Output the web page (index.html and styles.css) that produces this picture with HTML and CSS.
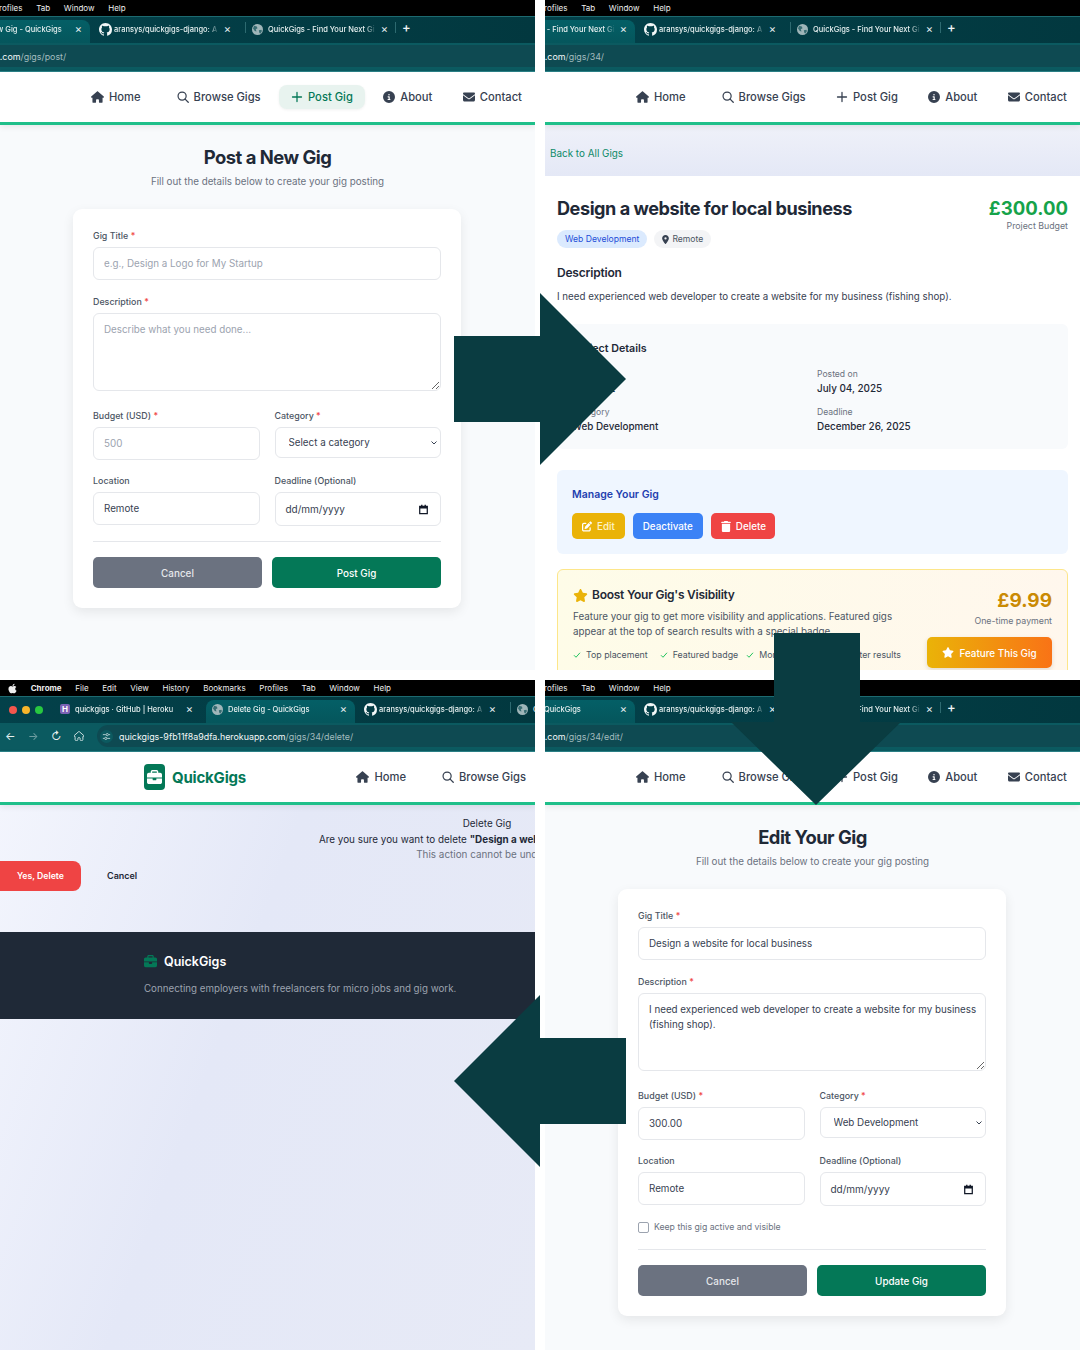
FILE: index.html
```html
<!DOCTYPE html>
<html lang="en">
  <head>
    <meta charset="UTF-8" />
    <meta name="viewport" content="width=device-width, initial-scale=1.0" />
    <title>QuickGigs</title>
    <link rel="stylesheet" href="styles.css">
  </head>

  <body>
    <svg class="defs" width="0" height="0">
      <symbol id="i-home" viewBox="0 0 576 512"><path d="M575.8 255.5c0 18-15 32.1-32 32.1h-32l.7 160.2c0 2.7-.2 5.4-.5 8.1V472c0 22.1-17.9 40-40 40H456c-1.1 0-2.2 0-3.3-.1c-1.4 .1-2.8 .1-4.2 .1H416 392c-22.1 0-40-17.9-40-40V448 384c0-17.7-14.3-32-32-32H256c-17.7 0-32 14.3-32 32v64 24c0 22.1-17.9 40-40 40H160 128.1c-1.5 0-3-.1-4.5-.2c-1.2 .1-2.4 .2-3.6 .2H104c-22.1 0-40-17.9-40-40V360c0-.9 0-1.9 .1-2.8V287.6H32c-18 0-32-14-32-32.1c0-9 3-17 10-24L266.4 8c7-7 15-8 22-8s15 2 21 7L564.8 231.5c8 7 12 15 11 24z"/></symbol>
      <symbol id="i-search" viewBox="0 0 16 16"><circle cx="6.8" cy="6.8" r="5.4" fill="none" stroke="currentColor" stroke-width="1.6"/><path d="M10.8 10.8l4.2 4.2" fill="none" stroke="currentColor" stroke-width="1.7" stroke-linecap="round"/></symbol>
      <symbol id="i-plus" viewBox="0 0 16 16"><path d="M8 2v12M2 8h12" fill="none" stroke="currentColor" stroke-width="1.7" stroke-linecap="round"/></symbol>
      <symbol id="i-info" viewBox="0 0 512 512"><path d="M256 512A256 256 0 1 0 256 0a256 256 0 1 0 0 512zM216 336h24V272H216c-13.3 0-24-10.7-24-24s10.7-24 24-24h48c13.3 0 24 10.7 24 24v88h8c13.3 0 24 10.7 24 24s-10.7 24-24 24H216c-13.3 0-24-10.7-24-24s10.7-24 24-24zm40-208a32 32 0 1 1 0 64 32 32 0 1 1 0-64z"/></symbol>
      <symbol id="i-mail" viewBox="0 0 512 512"><path d="M48 64C21.5 64 0 85.5 0 112c0 15.1 7.1 29.3 19.2 38.4L236.8 313.6c11.4 8.5 27 8.5 38.4 0L492.8 150.4c12.1-9.1 19.2-23.3 19.2-38.4c0-26.5-21.5-48-48-48H48zM0 176V384c0 35.3 28.7 64 64 64H448c35.3 0 64-28.7 64-64V176L294.4 339.2c-22.8 17.1-54 17.1-76.8 0L0 176z"/></symbol>
      <symbol id="i-star" viewBox="0 0 576 512"><path d="M316.9 18C311.6 7 300.4 0 288.1 0s-23.4 7-28.8 18L195 150.3 51.4 171.5c-12 1.8-22 10.2-25.7 21.7s-.7 24.2 7.9 32.7L137.8 329 113.2 474.7c-2 12 3 24.2 12.9 31.3s23 8 33.8 2.3l128.3-68.5 128.3 68.5c10.8 5.7 23.9 4.9 33.8-2.3s14.9-19.3 12.9-31.3L438.5 329 542.7 225.9c8.6-8.5 11.7-21.2 7.9-32.7s-13.7-19.9-25.7-21.7L381.2 150.3 316.9 18z"/></symbol>
      <symbol id="i-trash" viewBox="0 0 448 512"><path d="M135.2 17.7C140.6 6.8 151.7 0 163.8 0H284.2c12.1 0 23.2 6.8 28.6 17.7L320 32h96c17.7 0 32 14.3 32 32s-14.3 32-32 32H32C14.3 96 0 81.7 0 64S14.3 32 32 32h96l7.2-14.3zM32 128H416V448c0 35.3-28.7 64-64 64H96c-35.3 0-64-28.7-64-64V128z"/></symbol>
      <symbol id="i-edit" viewBox="0 0 512 512"><path d="M471.6 21.7c-21.9-21.9-57.3-21.9-79.2 0L362.3 51.7l97.9 97.9 30.1-30.1c21.9-21.9 21.9-57.3 0-79.2L471.6 21.7zm-299.2 220c-6.1 6.1-10.8 13.6-13.5 21.9l-29.6 88.8c-2.9 8.6-.6 18.1 5.8 24.6s15.9 8.7 24.6 5.8l88.8-29.6c8.2-2.7 15.7-7.4 21.9-13.5L437.7 172.3 339.7 74.3 172.4 241.7zM96 64C43 64 0 107 0 160V416c0 53 43 96 96 96H352c53 0 96-43 96-96V320c0-17.7-14.3-32-32-32s-32 14.3-32 32v96c0 17.7-14.3 32-32 32H96c-17.7 0-32-14.3-32-32V160c0-17.7 14.3-32 32-32h96c17.7 0 32-14.3 32-32s-14.3-32-32-32H96z"/></symbol>
      <symbol id="i-pin" viewBox="0 0 384 512"><path d="M215.7 499.2C267 435 384 279.4 384 192C384 86 298 0 192 0S0 86 0 192c0 87.4 117 243 168.3 307.2c12.3 15.3 35.1 15.3 47.4 0zM192 256a64 64 0 1 1 0-128 64 64 0 1 1 0 128z"/></symbol>
      <symbol id="i-case" viewBox="0 0 512 512"><path d="M184 48H328c4.4 0 8 3.6 8 8V96H176V56c0-4.4 3.6-8 8-8zm-56 8V96H64C28.7 96 0 124.7 0 160v96H192 320 512V160c0-35.3-28.7-64-64-64H384V56c0-30.9-25.1-56-56-56H184c-30.9 0-56 25.1-56 56zM512 288H320v32c0 17.7-14.3 32-32 32H224c-17.7 0-32-14.3-32-32V288H0V416c0 35.3 28.7 64 64 64H448c35.3 0 64-28.7 64-64V288z"/></symbol>
      <symbol id="i-github" viewBox="0 0 16 16"><path d="M8 0C3.58 0 0 3.58 0 8c0 3.54 2.29 6.53 5.47 7.59.4.07.55-.17.55-.38 0-.19-.01-.82-.01-1.49-2.01.37-2.53-.49-2.69-.94-.09-.23-.48-.94-.82-1.13-.28-.15-.68-.52-.01-.53.63-.01 1.08.58 1.23.82.72 1.21 1.87.87 2.33.66.07-.52.28-.87.51-1.07-1.78-.2-3.64-.89-3.64-3.95 0-.87.31-1.59.82-2.15-.08-.2-.36-1.02.08-2.12 0 0 .67-.21 2.2.82.64-.18 1.32-.27 2-.27.68 0 1.36.09 2 .27 1.53-1.04 2.2-.82 2.2-.82.44 1.1.16 1.92.08 2.12.51.56.82 1.27.82 2.15 0 3.07-1.87 3.75-3.65 3.95.29.25.54.73.54 1.48 0 1.07-.01 1.93-.01 2.2 0 .21.15.46.55.38A8.013 8.013 0 0016 8c0-4.42-3.58-8-8-8z"/></symbol>
      <symbol id="i-globe" viewBox="0 0 16 16"><circle cx="8" cy="8" r="8"/><path d="M3 2.500l4 1 1 2.500-2.500 1.500L6.500 11 4 10 1.500 6.500zM10 9l3.500-.5 1 1.500-2.500 4-1.500-1.500z" fill="#0b4d54" opacity=".7"/></symbol>
      <symbol id="i-apple" viewBox="0 0 384 512"><path d="M318.7 268.700c-.2-36.700 16.400-64.400 50-84.800-18.800-26.900-47.200-41.700-84.700-44.600-35.500-2.800-74.300 20.700-88.500 20.700-15 0-49.400-19.700-76.400-19.700C63.300 141.200 4 184.800 4 273.500q0 39.300 14.400 81.200c12.800 36.700 59 126.700 107.200 125.200 25.200-.6 43-17.900 75.800-17.900 31.800 0 48.300 17.900 76.400 17.900 48.600-.7 90.400-82.500 102.600-119.300-65.200-30.700-61.700-90-61.700-91.900zm-56.600-164.200c27.300-32.400 24.800-61.900 24-72.500-24.100 1.400-52 16.400-67.900 34.900-17.500 19.800-27.800 44.300-25.600 71.900 26.100 2 49.900-11.400 69.500-34.300z"/></symbol>
      <symbol id="i-cal" viewBox="0 0 16 16"><path d="M2.500 3.500h11v10.500h-11z" fill="none" stroke="currentColor" stroke-width="1.800"/><path d="M2.500 3h11v3.500h-11zM4.500 1h2v2h-2zM9.500 1h2v2h-2z" fill="currentColor"/></symbol>
      <symbol id="i-check" viewBox="0 0 16 16"><path d="M2 8.500l4 4 8-9" fill="none" stroke="currentColor" stroke-width="2"/></symbol>
      <symbol id="i-tune" viewBox="0 0 12 12"><path d="M1 3.500h4M9 3.500h2M1 8.500h2M7 8.500h4" fill="none" stroke="currentColor" stroke-width="1"/><circle cx="7" cy="3.500" r="1.500" fill="none" stroke="currentColor"/><circle cx="5" cy="8.500" r="1.500" fill="none" stroke="currentColor"/></symbol>
    </svg>

    <div class="collage">

      <!-- post a new gig -->
      <section class="panel cropped">
        <header class="browser">
          <div class="menubar">
            <span>Profiles</span><span>Tab</span><span>Window</span><span>Help</span>
          </div>
          <div class="tabstrip">
            <div class="tab active"><span class="tab-name">Post a New Gig - QuickGigs</span><span class="close">×</span></div>
            <div class="tab"><svg class="favicon gh"><use href="#i-github"/></svg><span class="tab-name">aransys/quickgigs-django: A r</span><span class="close">×</span></div>
            <div class="tab last"><svg class="favicon"><use href="#i-globe"/></svg><span class="tab-name">QuickGigs - Find Your Next Gi</span><span class="close">×</span></div>
            <span class="newtab">+</span>
          </div>
          <div class="addressbar">
            <div class="url"><span>quickgigs-9fb11f8a9dfa.herokuapp.com<em>/gigs/post/</em></span></div>
          </div>
        </header>
        <nav class="nav">
          <a class="nav-item first"><svg class="wide"><use href="#i-home"/></svg>Home</a>
          <a class="nav-item"><svg><use href="#i-search"/></svg>Browse Gigs</a>
          <a class="nav-item current"><svg><use href="#i-plus"/></svg>Post Gig</a>
          <a class="nav-item"><svg><use href="#i-info"/></svg>About</a>
          <a class="nav-item"><svg><use href="#i-mail"/></svg>Contact</a>
        </nav>
        <main class="form-page">
          <h1>Post a New Gig</h1>
          <p class="lead">Fill out the details below to create your gig posting</p>
          <form class="card">
            <div class="field">
              <label>Gig Title <i>*</i></label>
              <input type="text" placeholder="e.g., Design a Logo for My Startup" />
            </div>
            <div class="field">
              <label>Description <i>*</i></label>
              <textarea placeholder="Describe what you need done..."></textarea>
            </div>
            <div class="row">
              <div class="field">
                <label>Budget (USD) <i>*</i></label>
                <input type="text" placeholder="500" />
              </div>
              <div class="field">
                <label>Category <i>*</i></label>
                <select><option>Select a category</option></select>
              </div>
              <div class="field last">
                <label>Location</label>
                <input type="text" value="Remote" />
              </div>
              <div class="field last">
                <label>Deadline (Optional)</label>
                <div class="date"><span>dd/mm/yyyy</span><svg><use href="#i-cal"/></svg></div>
              </div>
            </div>
            <div class="actions">
              <button type="button" class="btn grey">Cancel</button>
              <button type="button" class="btn green">Post Gig</button>
            </div>
          </form>
        </main>
      </section>

      <!-- gig detail -->
      <section class="panel cropped">
        <header class="browser">
          <div class="menubar">
            <span>Profiles</span><span>Tab</span><span>Window</span><span>Help</span>
          </div>
          <div class="tabstrip">
            <div class="tab active"><span class="tab-name">QuickGigs - Find Your Next Gi</span><span class="close">×</span></div>
            <div class="tab"><svg class="favicon gh"><use href="#i-github"/></svg><span class="tab-name">aransys/quickgigs-django: A r</span><span class="close">×</span></div>
            <div class="tab last"><svg class="favicon"><use href="#i-globe"/></svg><span class="tab-name">QuickGigs - Find Your Next Gi</span><span class="close">×</span></div>
            <span class="newtab">+</span>
          </div>
          <div class="addressbar">
            <div class="url"><span>quickgigs-9fb11f8a9dfa.herokuapp.com<em>/gigs/34/</em></span></div>
          </div>
        </header>
        <nav class="nav">
          <a class="nav-item first"><svg class="wide"><use href="#i-home"/></svg>Home</a>
          <a class="nav-item"><svg><use href="#i-search"/></svg>Browse Gigs</a>
          <a class="nav-item"><svg><use href="#i-plus"/></svg>Post Gig</a>
          <a class="nav-item"><svg><use href="#i-info"/></svg>About</a>
          <a class="nav-item"><svg><use href="#i-mail"/></svg>Contact</a>
        </nav>
        <div class="backbar"><a>Back to All Gigs</a></div>
        <main class="detail">
          <div class="detail-head">
            <div>
              <h2>Design a website for local business</h2>
              <div class="tags">
                <span class="tag blue">Web Development</span>
                <span class="tag plain"><svg><use href="#i-pin"/></svg>Remote</span>
              </div>
            </div>
            <div class="budget">
              <strong>£300.00</strong>
              <span>Project Budget</span>
            </div>
          </div>
          <h3>Description</h3>
          <p class="desc">I need experienced web developer to create a website for my business (fishing shop).</p>
          <div class="facts">
            <h4>Project Details</h4>
            <dl>
              <div><dt>Posted by</dt><dd>aransys2</dd></div>
              <div><dt>Posted on</dt><dd>July 04, 2025</dd></div>
              <div><dt>Category</dt><dd>Web Development</dd></div>
              <div><dt>Deadline</dt><dd>December 26, 2025</dd></div>
            </dl>
          </div>
          <div class="manage">
            <h4>Manage Your Gig</h4>
            <div class="manage-btns">
              <a class="mini amber"><svg><use href="#i-edit"/></svg>Edit</a>
              <a class="mini blue">Deactivate</a>
              <a class="mini red"><svg><use href="#i-trash"/></svg>Delete</a>
            </div>
          </div>
          <div class="boost">
            <div class="boost-text">
              <h4><svg><use href="#i-star"/></svg>Boost Your Gig's Visibility</h4>
              <p>Feature your gig to get more visibility and applications. Featured gigs appear at the top of search results with a special badge.</p>
              <ul>
                <li><svg><use href="#i-check"/></svg>Top placement</li>
                <li><svg><use href="#i-check"/></svg>Featured badge</li>
                <li><svg><use href="#i-check"/></svg>More visibility</li>
                <li><svg><use href="#i-check"/></svg>Better results</li>
              </ul>
            </div>
            <div class="boost-buy">
              <strong>£9.99</strong>
              <span>One-time payment</span>
              <a class="feature"><svg><use href="#i-star"/></svg>Feature This Gig</a>
            </div>
          </div>
        </main>
      </section>

      <!-- delete confirmation -->
      <section class="panel delete-panel">
        <header class="browser">
          <div class="menubar">
            <svg class="apple"><use href="#i-apple"/></svg><b>Chrome</b><span>File</span><span>Edit</span><span>View</span><span>History</span><span>Bookmarks</span><span>Profiles</span><span>Tab</span><span>Window</span><span>Help</span>
          </div>
          <div class="tabstrip">
            <div class="lights"><i class="red"></i><i class="amber"></i><i class="green"></i></div>
            <div class="tab"><span class="heroku">H</span><span class="tab-name">quickgigs · GitHub | Heroku</span><span class="close">×</span></div>
            <div class="tab active"><svg class="favicon"><use href="#i-globe"/></svg><span class="tab-name">Delete Gig - QuickGigs</span><span class="close">×</span></div>
            <div class="tab"><svg class="favicon gh"><use href="#i-github"/></svg><span class="tab-name">aransys/quickgigs-django: A r</span><span class="close">×</span></div>
            <div class="tab last"><svg class="favicon"><use href="#i-globe"/></svg><span>Q</span></div>
          </div>
          <div class="addressbar">
            <span class="ctl">←</span><span class="ctl off">→</span><span class="ctl">↻</span><svg class="ctl-home"><use href="#i-home"/></svg>
            <div class="url"><svg class="tune"><use href="#i-tune"/></svg><span>quickgigs-9fb11f8a9dfa.herokuapp.com<em>/gigs/34/delete/</em></span></div>
          </div>
        </header>
        <nav class="nav">
          <a class="brand"><span class="brand-mark"><svg><use href="#i-case"/></svg></span>QuickGigs</a>
          <a class="nav-item first"><svg class="wide"><use href="#i-home"/></svg>Home</a>
          <a class="nav-item"><svg><use href="#i-search"/></svg>Browse Gigs</a>
        </nav>
        <main class="delete-page">
          <div class="confirm">
            <p>Delete Gig</p>
            <p>Are you sure you want to delete <b>"Design a website for local business"</b>?</p>
            <p class="muted">This action cannot be undone.</p>
          </div>
          <div class="confirm-btns">
            <a class="yes">Yes, Delete</a>
            <a class="no">Cancel</a>
          </div>
          <footer class="footer">
            <h5><svg><use href="#i-case"/></svg>QuickGigs</h5>
            <p>Connecting employers with freelancers for micro jobs and gig work.</p>
          </footer>
        </main>
      </section>

      <!-- edit gig -->
      <section class="panel cropped">
        <header class="browser">
          <div class="menubar">
            <span>Profiles</span><span>Tab</span><span>Window</span><span>Help</span>
          </div>
          <div class="tabstrip">
            <div class="tab active tail"><span class="tab-name">QuickGigs</span><span class="close">×</span></div>
            <div class="tab"><svg class="favicon gh"><use href="#i-github"/></svg><span class="tab-name">aransys/quickgigs-django: A r</span><span class="close">×</span></div>
            <div class="tab last"><svg class="favicon"><use href="#i-globe"/></svg><span class="tab-name">QuickGigs - Find Your Next Gi</span><span class="close">×</span></div>
            <span class="newtab">+</span>
          </div>
          <div class="addressbar">
            <div class="url"><span>quickgigs-9fb11f8a9dfa.herokuapp.com<em>/gigs/34/edit/</em></span></div>
          </div>
        </header>
        <nav class="nav">
          <a class="nav-item first"><svg class="wide"><use href="#i-home"/></svg>Home</a>
          <a class="nav-item"><svg><use href="#i-search"/></svg>Browse Gigs</a>
          <a class="nav-item"><svg><use href="#i-plus"/></svg>Post Gig</a>
          <a class="nav-item"><svg><use href="#i-info"/></svg>About</a>
          <a class="nav-item"><svg><use href="#i-mail"/></svg>Contact</a>
        </nav>
        <main class="form-page">
          <h1>Edit Your Gig</h1>
          <p class="lead">Fill out the details below to create your gig posting</p>
          <form class="card">
            <div class="field">
              <label>Gig Title <i>*</i></label>
              <input type="text" value="Design a website for local business" />
            </div>
            <div class="field">
              <label>Description <i>*</i></label>
              <textarea>I need experienced web developer to create a website for my business (fishing shop).</textarea>
            </div>
            <div class="row">
              <div class="field">
                <label>Budget (USD) <i>*</i></label>
                <input type="text" value="300.00" />
              </div>
              <div class="field">
                <label>Category <i>*</i></label>
                <select><option>Web Development</option></select>
              </div>
              <div class="field last">
                <label>Location</label>
                <input type="text" value="Remote" />
              </div>
              <div class="field last">
                <label>Deadline (Optional)</label>
                <div class="date"><span>dd/mm/yyyy</span><svg><use href="#i-cal"/></svg></div>
              </div>
            </div>
            <label class="keep"><span class="tick"></span>Keep this gig active and visible</label>
            <div class="actions">
              <button type="button" class="btn grey">Cancel</button>
              <button type="button" class="btn green">Update Gig</button>
            </div>
          </form>
        </main>
      </section>

      <svg class="arrows" viewBox="0 0 1080 1350">
        <polygon points="454,336 540,336 540,293 626,379 540,465 540,422 454,422" />
        <polygon points="774,633 860,633 860,722 901,722 816,805 731,722 774,722" />
        <polygon points="626,1038 540,1038 540,995 454,1081 540,1167 540,1124 626,1124" />
      </svg>
    </div>
  </body>
</html>
```

FILE: styles.css
```css
* {
  box-sizing: border-box;
}

body {
  margin: 0;
  background: #fff;
  font-family: Inter, "Liberation Sans", sans-serif;
  color: #1f2937;
}

.defs {
  position: absolute;
}

.collage {
  position: relative;
  width: 1080px;
  height: 1350px;
  display: grid;
  grid-template-columns: 535px 535px;
  grid-template-rows: 670px 670px;
  gap: 10px;
  overflow: hidden;
}

.panel {
  overflow: hidden;
  display: flex;
  flex-direction: column;
  background: #f8fafc;
}

.arrows {
  position: absolute;
  left: 0;
  top: 0;
  width: 1080px;
  height: 1350px;
  fill: #0a3c41;
  pointer-events: none;
}

/* browser */
.browser {
  flex: none;
}

.menubar {
  height: 16px;
  background: #000;
  color: #eee;
  font-size: 8px;
  display: flex;
  align-items: center;
  padding-left: 8px;
  gap: 13.7px;
}

.menubar b {
  font-weight: 700;
}

.apple {
  width: 9px;
  height: 11px;
  fill: #eee;
}

.tabstrip {
  height: 27px;
  background: linear-gradient(90deg, #03414a, #02383f);
  border-top: 1px solid #1d6a70;
  display: flex;
  align-items: flex-end;
  color: #e6f0f0;
  font-size: 7.5px;
  font-weight: 500;
}

.lights {
  width: 52px;
  flex: none;
  align-self: center;
  display: flex;
  gap: 5px;
  padding-left: 9px;
}

.lights i {
  width: 8px;
  height: 8px;
  border-radius: 50%;
}

.lights .red { background: #f4564d; }
.lights .amber { background: #f7b52b; }
.lights .green { background: #28c840; }

.tab {
  width: 149px;
  height: 23px;
  flex: none;
  display: flex;
  align-items: center;
  gap: 5px;
  padding: 0 8px 5px;
  border-radius: 8px 8px 0 0;
  white-space: nowrap;
}

.tab.active {
  background: linear-gradient(180deg, #045f66, #05565c);
  margin-left: 5px;
  padding-left: 6px;
}

.tab.active + .tab {
  padding-left: 9px;
}

.tab.last {
  position: relative;
  width: 157px;
  padding-left: 13px;
}

.tab.last::before,
.tab.last::after {
  content: "";
  position: absolute;
  top: 2px;
  height: 11px;
  width: 1px;
  background: #2d6a70;
}

.tab.last::before { left: 6px; }
.tab.last::after { right: 0; }

.tab-name {
  flex: 1;
  overflow: hidden;
  -webkit-mask-image: linear-gradient(90deg, #000 90%, transparent);
}

.close {
  font-size: 11px;
  line-height: 1;
  font-weight: 400;
}

.favicon {
  width: 11px;
  height: 11px;
  flex: none;
  fill: #9fb6b9;
}

.favicon.gh {
  width: 13px;
  height: 13px;
  margin-right: -3px;
  fill: #f2f7f7;
}

.heroku {
  width: 10px;
  height: 10px;
  flex: none;
  border-radius: 2px;
  background: #7b62b5;
  color: #fff;
  font-size: 8px;
  font-weight: 700;
  line-height: 10px;
  text-align: center;
}

.newtab {
  align-self: flex-start;
  margin: 4px 0 0 6px;
  font-size: 13px;
  line-height: 1;
  color: #f0f6f6;
}

.addressbar {
  height: 29px;
  background: #0b5a60;
  border-bottom: 1px solid #2b8288;
  display: flex;
  align-items: center;
  padding: 0 0 2px 5px;
  color: #e6f0f0;
}

.ctl {
  width: 23px;
  font-size: 11px;
  line-height: 1;
}

.ctl.off {
  opacity: .45;
}

.ctl-home {
  width: 10px;
  height: 10px;
  fill: none;
  stroke: #e6f0f0;
  stroke-width: 50;
}

.url {
  flex: 1;
  height: 22px;
  margin-left: 13px;
  background: #0e4a52;
  border-radius: 11px 0 0 11px;
  display: flex;
  align-items: center;
  gap: 6px;
  padding-left: 3px;
  font-size: 8.9px;
  color: #f3f8f8;
  white-space: nowrap;
}

.url em {
  font-style: normal;
  color: #a3bcbf;
}

.tune {
  width: 13px;
  height: 13px;
  padding: 2px;
  border-radius: 50%;
  background: #0c5a60;
  color: #dcebec;
}

/* site nav */
.nav {
  height: 53px;
  flex: none;
  background: #fff;
  border-bottom: 3px solid #1fbf8a;
  box-shadow: 0 2px 6px rgba(0, 0, 0, .08);
  display: flex;
  align-items: center;
  gap: 6.4px;
  padding-left: 144px;
  position: relative;
  color: #374151;
  font-size: 11.2px;
  font-weight: 500;
}

.brand {
  width: 194px;
  flex: none;
  display: flex;
  align-items: center;
  gap: 7px;
  color: #047857;
  font-size: 15px;
  font-weight: 700;
  letter-spacing: -.2px;
}

.brand-mark {
  width: 21px;
  height: 26px;
  border-radius: 4px;
  background: #047857;
  display: flex;
  align-items: center;
  justify-content: center;
}

.brand-mark svg {
  width: 15px;
  height: 15px;
  fill: #fff;
}

.nav-item {
  height: 24px;
  flex: none;
  display: flex;
  align-items: center;
  gap: 5px;
  padding: 0 12px;
  border-radius: 8px;
  white-space: nowrap;
}

.nav-item.first {
  margin-right: 5.6px;
}

.nav-item svg {
  width: 12px;
  height: 12px;
  fill: currentColor;
}

.nav-item svg.wide {
  width: 13px;
}

.nav-item.current {
  background: #e8f3ef;
  color: #047857;
  box-shadow: 0 1px 3px rgba(0, 0, 0, .06);
}

/* these shots lost the left of the browser window */
.cropped .menubar {
  padding-left: 0;
}

.cropped .menubar span:first-child {
  margin-left: -6px;
}

.cropped .tab.active {
  margin-left: -59px;
  padding-left: 22px;
}

.cropped .tab.active.tail {
  padding-left: 58px;
}

.cropped .addressbar {
  padding-left: 0;
}

.cropped .url {
  margin-left: -146px;
  padding-left: 0;
}

.cropped .nav {
  padding-left: 79px;
}

/* post + edit form */
.form-page {
  flex: 1;
  padding-top: 19px;
}

h1 {
  margin: 0;
  text-align: center;
  font-size: 18.4px;
  line-height: 26px;
  font-weight: 700;
  letter-spacing: -.5px;
}

.lead {
  margin: 5px 0 20px;
  text-align: center;
  font-size: 9.8px;
  line-height: 14px;
  color: #6b7280;
}

.card {
  width: 388px;
  margin-left: 73px;
  padding: 20px;
  background: #fff;
  border-radius: 9px;
  box-shadow: 0 4px 12px rgba(0, 0, 0, .08);
}

.field {
  margin-bottom: 14px;
}

.card > .field:first-child {
  margin-bottom: 15px;
}

.field.last {
  margin-bottom: 0;
}

.field label {
  display: block;
  height: 14px;
  margin-bottom: 4px;
  font-size: 8.9px;
  line-height: 14px;
  font-weight: 500;
  color: #4b5563;
}

.field label i {
  font-style: normal;
  color: #ef4444;
}

.field input,
.field textarea,
.date {
  display: block;
  width: 100%;
  height: 33px;
  padding: 0 10px;
  border: 1px solid #e5e7eb;
  border-radius: 6px;
  background: #fff;
  font-family: inherit;
  font-size: 9.8px;
  color: #374151;
  outline: none;
}

.field textarea {
  height: 78px;
  margin: 1px 0 18px;
  padding: 8px 5px 8px 10px;
  line-height: 15px;
}

::placeholder {
  color: #9ca3af;
}

.field select {
  display: block;
  width: 100%;
  height: 31px;
  padding: 0 13px;
  appearance: none;
  border: 1px solid #e5e7eb;
  border-radius: 6px;
  background: #fff url("data:image/svg+xml,%3Csvg xmlns='http://www.w3.org/2000/svg' width='6' height='4'%3E%3Cpath d='M.5.5l2.500 2.500 2.500-2.500' fill='none' stroke='%23374151'/%3E%3C/svg%3E") no-repeat right 3px center;
  font-family: inherit;
  font-size: 9.8px;
  color: #374151;
}

.date {
  height: 34px;
  padding-right: 11px;
  display: flex;
  align-items: center;
  justify-content: space-between;
  font-size: 10px;
}

.date svg {
  width: 11px;
  height: 11px;
  color: #111827;
}

.row {
  display: grid;
  grid-template-columns: 1fr 1fr;
  column-gap: 15px;
}

.keep {
  display: flex;
  align-items: center;
  gap: 5px;
  height: 14px;
  margin-top: 14px;
  font-size: 8.7px;
  color: #6b7280;
}

.tick {
  width: 11px;
  height: 11px;
  border: 1px solid #9ca3af;
  border-radius: 2px;
  background: #fff;
}

.actions {
  display: flex;
  gap: 10px;
  margin-top: 15px;
  padding-top: 15px;
  border-top: 1px solid #e5e7eb;
}

.btn {
  flex: 1;
  height: 31px;
  border: 0;
  border-radius: 5px;
  color: #fff;
  font-family: inherit;
  font-size: 9.9px;
  font-weight: 500;
}

.btn.grey { background: #6b7280; color: #e5e7eb; }
.btn.green { background: #047857; }

/* gig detail */
.backbar {
  height: 51px;
  flex: none;
  background: linear-gradient(180deg, #eff1f9, #e4e8f6);
  padding: 21px 0 0 5px;
  font-size: 9.9px;
  line-height: 14px;
  color: #0d8a68;
}

.detail {
  flex: 1;
  background: #fff;
  padding: 0 12px;
}

.detail-head {
  display: flex;
  justify-content: space-between;
  padding-top: 21px;
}

h2 {
  margin: 0;
  font-size: 18.1px;
  line-height: 22px;
  font-weight: 700;
  letter-spacing: -.45px;
}

.tags {
  display: flex;
  gap: 7px;
  margin-top: 11px;
}

.tag {
  height: 18px;
  padding: 0 8px;
  border-radius: 9px;
  display: flex;
  align-items: center;
  gap: 3px;
  font-size: 8.6px;
}

.tag.blue { background: #dbeafe; color: #1d4ed8; }
.tag.plain { background: #f3f4f6; color: #4b5563; }

.tag svg {
  width: 7px;
  height: 9px;
  fill: #374151;
}

.budget {
  text-align: right;
}

.budget strong {
  display: block;
  font-size: 18.6px;
  line-height: 23px;
  font-weight: 700;
  color: #16a34a;
}

.budget span {
  display: block;
  font-size: 8.8px;
  line-height: 12px;
  color: #6b7280;
}

h3 {
  margin: 17px 0 0;
  font-size: 12px;
  line-height: 16px;
  font-weight: 600;
  letter-spacing: -.2px;
}

.desc {
  margin: 9px 0 0;
  font-size: 9.75px;
  line-height: 14px;
  color: #374151;
}

.facts {
  margin-top: 20px;
  height: 125px;
  padding: 18px 15px 0;
  background: #f8fafc;
  border-radius: 6px;
}

h4 {
  margin: 0;
  font-size: 10.7px;
  line-height: 14px;
  font-weight: 600;
}

.facts dl {
  margin: 12px 0 0;
  display: grid;
  grid-template-columns: 245px 1fr;
  row-gap: 11px;
}

dt {
  font-size: 8.6px;
  line-height: 12px;
  color: #6b7280;
}

dd {
  margin: 1px 0 0;
  font-size: 9.9px;
  line-height: 14px;
  font-weight: 500;
  color: #1f2937;
}

.manage {
  margin-top: 21px;
  height: 84px;
  padding: 18px 15px 0;
  background: #eff6ff;
  border-radius: 6px;
}

.manage h4 {
  font-size: 10.5px;
  color: #1e40af;
}

.manage-btns {
  display: flex;
  gap: 8px;
  margin-top: 11px;
}

.mini {
  height: 26px;
  padding: 0 10px;
  border-radius: 5px;
  display: flex;
  align-items: center;
  gap: 5px;
  color: #fff;
  font-size: 9.8px;
  font-weight: 500;
}

.mini svg {
  width: 10px;
  height: 11px;
  fill: #fff;
}

.mini.amber { background: #eab308; color: #fdf3c8; }
.mini.blue { background: #3b82f6; }
.mini.red { background: #ef4444; padding-right: 9px; }

.boost {
  margin-top: 15px;
  height: 120px;
  padding: 18px 15px 0;
  border: 1px solid #fde68a;
  border-radius: 6px;
  background: linear-gradient(90deg, #fefce8, #fff7ed);
  display: flex;
  justify-content: space-between;
}

.boost-text {
  width: 340px;
}

.boost h4 {
  display: flex;
  align-items: center;
  gap: 4px;
  font-size: 12px;
  letter-spacing: -.25px;
}

.boost h4 svg {
  width: 15px;
  height: 13px;
  fill: #eab308;
}

.boost p {
  margin: 7px 0 0;
  font-size: 9.8px;
  line-height: 15px;
  color: #4b5563;
}

.boost ul {
  margin: 10px 0 0;
  padding: 0;
  list-style: none;
  display: flex;
  gap: 12px;
  white-space: nowrap;
  font-size: 8.8px;
  color: #4b5563;
}

.boost li {
  display: flex;
  align-items: center;
  gap: 5px;
}

.boost li:nth-child(3) {
  margin: 0 4px 0 -4px;
}

.boost li svg {
  width: 8px;
  height: 8px;
  color: #22c55e;
}

.boost-buy {
  text-align: right;
  display: flex;
  flex-direction: column;
  align-items: flex-end;
}

.boost-buy strong {
  margin-top: 1px;
  font-size: 19px;
  line-height: 24px;
  font-weight: 700;
  color: #ca8a04;
}

.boost-buy span {
  margin-top: 1px;
  font-size: 8.8px;
  line-height: 13px;
  color: #6b7280;
}

.feature {
  width: 125px;
  height: 31px;
  margin-top: 10px;
  border-radius: 5px;
  background: linear-gradient(90deg, #eab308, #f97316);
  box-shadow: 0 2px 5px rgba(0, 0, 0, .12);
  display: flex;
  align-items: center;
  justify-content: center;
  gap: 5px;
  color: #fff;
  font-size: 9.9px;
  font-weight: 500;
}

.feature svg {
  width: 12px;
  height: 11px;
  fill: #fff;
}

/* delete page */
.delete-panel {
  background: linear-gradient(110deg, #f5f7fe 0%, #e4e8f7 45%, #e7eaf6 100%);
}

.delete-page {
  flex: 1;
  padding-top: 11px;
}

.confirm {
  width: 974px;
  text-align: center;
  font-size: 9.9px;
  line-height: 15.5px;
  color: #1f2937;
}

.confirm p {
  margin: 0;
}

.confirm .muted {
  color: #6b7280;
}

.confirm-btns {
  display: flex;
  align-items: center;
  margin-top: -2px;
}

.yes {
  width: 81px;
  height: 30px;
  border-radius: 0 8px 8px 0;
  background: #ef4444;
  color: #fff;
  font-size: 8.7px;
  font-weight: 600;
  line-height: 30px;
  text-align: center;
}

.no {
  margin-left: 26px;
  font-size: 9px;
  font-weight: 600;
  color: #1f2937;
}

.footer {
  height: 87px;
  margin-top: 41px;
  padding: 22px 0 0 144px;
  background: #1f2937;
}

.footer h5 {
  margin: 0;
  display: flex;
  align-items: center;
  gap: 7px;
  font-size: 12.5px;
  line-height: 16px;
  font-weight: 600;
  color: #fff;
}

.footer h5 svg {
  width: 13px;
  height: 13px;
  fill: #047857;
}

.footer p {
  margin: 12px 0 0;
  font-size: 9.75px;
  line-height: 14px;
  color: #9ca3af;
}
```
